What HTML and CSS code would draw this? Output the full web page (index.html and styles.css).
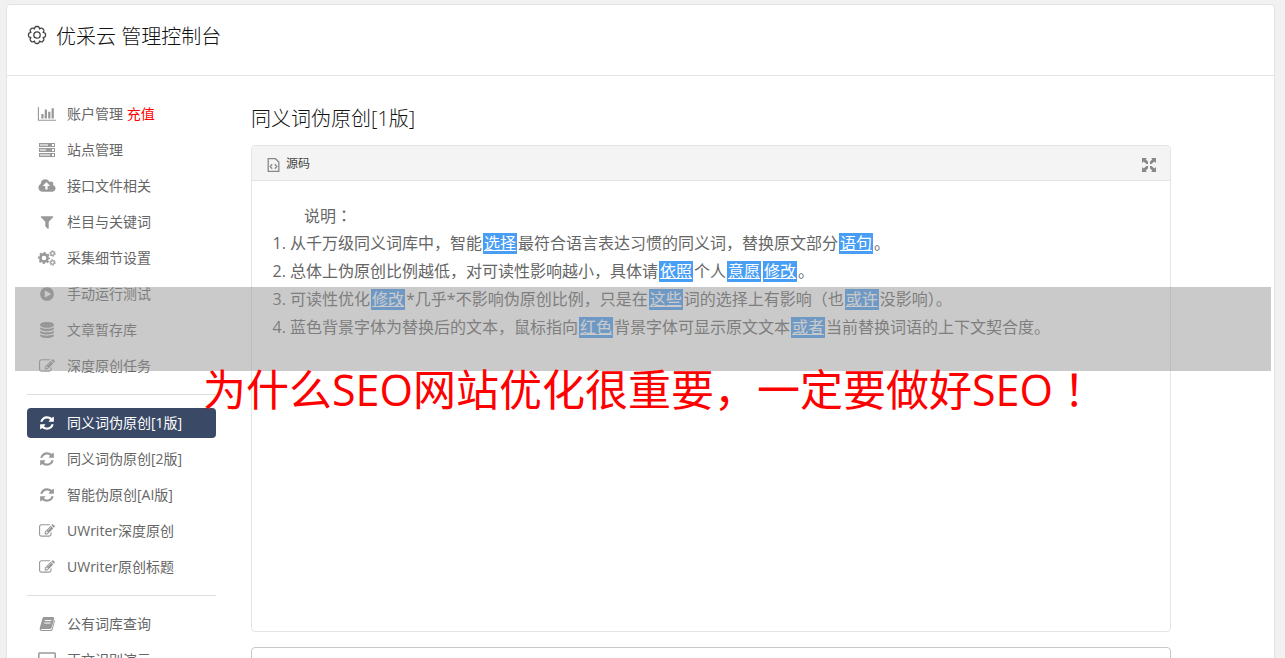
FILE: index.html
```html
<!DOCTYPE html>
<html lang="zh-CN">
<head>
    <meta charset="UTF-8">
    <meta name="viewport" content="width=device-width, initial-scale=1.0">
    <title>优采云 管理控制台</title>
    <link rel="stylesheet" href="styles.css">
</head>
<body>
    <svg class="sprite" aria-hidden="true">
        <symbol id="chart" viewBox="0 0 2048 1792"><path d="M640 896v512h-256v-512h256zm384-512v1024h-256v-1024h256zm1024 1152v128h-2048v-1536h128v1408h1920zm-640-896v768h-256v-768h256zm384-384v1152h-256v-1152h256z"/></symbol>
        <symbol id="server" viewBox="0 0 18 16"><path fill-rule="evenodd" d="M1 1h16v4H1zM2 2v2h8V2zM14 2v2h2V2zM1 6h16v4H1zM2 7v2h6V7zM14 7v2h2V7zM1 11h16v4H1zM2 12v2h10v-2zM14 12v2h2v-2z"/><path opacity=".45" d="M2 2h8v2H2zM2 7h6v2H2zM2 12h10v2H2z"/></symbol>
        <symbol id="cloud" viewBox="0 0 1920 1792"><path d="M1280 864q0-14-9-23l-352-352q-9-9-23-9t-23 9l-351 351q-10 12-10 24 0 14 9 23t23 9h224v352q0 13 9.500 22.500t22.500 9.500h192q13 0 22.500-9.500t9.500-22.500v-352h224q13 0 22.500-9.500t9.500-22.500zm640 288q0 159-112.500 271.500t-271.500 112.500h-1088q-185 0-316.500-131.500t-131.500-316.500q0-130 70-240t188-165q-2-30-2-43 0-212 150-362t362-150q156 0 285.500 87t188.500 231q71-62 166-62 106 0 181 75t75 181q0 76-41 138 130 31 213.500 135.500t83.500 238.500z"/></symbol>
        <symbol id="filter" viewBox="0 0 1792 1792"><path d="M1595 295q17 41-14 70l-493 493v742q0 42-39 59-13 5-25 5-27 0-45-19l-256-256q-19-19-19-45v-486l-493-493q-31-29-14-70 17-39 59-39h1280q42 0 59 39z"/></symbol>
        <symbol id="cogs" viewBox="0 0 18 16">
            <g fill="none" stroke="currentColor">
                <circle cx="6" cy="8" r="3.600" stroke-width="2.600"/>
                <circle cx="6" cy="8" r="5.300" stroke-width="1.600" stroke-dasharray="2.080 2.080" stroke-dashoffset="1.040"/>
                <circle cx="14.500" cy="3.500" r="1.800" stroke-width="1.300"/>
                <circle cx="14.500" cy="3.500" r="2.800" stroke-width="1" stroke-dasharray="1.460 1.460"/>
                <circle cx="14.500" cy="12.500" r="1.800" stroke-width="1.300"/>
                <circle cx="14.500" cy="12.500" r="2.800" stroke-width="1" stroke-dasharray="1.460 1.460"/>
            </g>
        </symbol>
        <symbol id="play" viewBox="0 0 1792 1792"><path d="M896 128q209 0 385.500 103t279.500 279.500 103 385.500-103 385.500-279.500 279.500-385.500 103-385.500-103-279.500-279.500-103-385.500 103-385.500 279.500-279.500 385.500-103zm384 823q32-18 32-55t-32-55l-544-320q-31-19-64-1-32 19-32 56v640q0 37 32 56 16 8 32 8 17 0 32-9z"/></symbol>
        <symbol id="database" viewBox="0 0 1792 1792"><path d="M896 768q237 0 443-43t325-127v170q0 69-103 128t-280 93.500-385 34.500-385-34.500-280-93.500-103-128v-170q119 84 325 127t443 43zm0 768q237 0 443-43t325-127v170q0 69-103 128t-280 93.500-385 34.500-385-34.500-280-93.500-103-128v-170q119 84 325 127t443 43zm0-384q237 0 443-43t325-127v170q0 69-103 128t-280 93.500-385 34.500-385-34.500-280-93.500-103-128v-170q119 84 325 127t443 43zm0-1152q208 0 385 34.500t280 93.500 103 128v128q0 69-103 128t-280 93.500-385 34.500-385-34.500-280-93.500-103-128v-128q0-69 103-128t280-93.500 385-34.500z"/></symbol>
        <symbol id="edit" viewBox="0 0 1792 1792"><path d="M888 1184l116-116-152-152-116 116v56h96v96h56zm440-720q-16-16-33 1l-350 350q-17 17-1 33t33-1l350-350q17-17 1-33zm80 594v190q0 119-84.500 203.500t-203.500 84.500h-832q-119 0-203.500-84.500t-84.500-203.500v-832q0-119 84.500-203.500t203.500-84.500h832q63 0 117 25 15 7 18 23 3 17-9 29l-49 49q-14 14-32 8-23-6-45-6h-832q-66 0-113 47t-47 113v832q0 66 47 113t113 47h832q66 0 113-47t47-113v-126q0-13 9-22l64-64q15-15 35-7t20 29zm-96-738l288 288-672 672h-288v-288zm444 132l-92 92-288-288 92-92q28-28 68-28t68 28l152 152q28 28 28 68t-28 68z"/></symbol>
        <symbol id="refresh" viewBox="0 0 1792 1792"><path d="M1639 1056q0 5-1 7-64 268-268 434.500t-478 166.500q-146 0-282.500-55t-243.500-157l-129 129q-19 19-45 19t-45-19-19-45v-448q0-26 19-45t45-19h448q26 0 45 19t19 45-19 45l-137 137q71 66 161 102t187 36q134 0 250-65t186-179q11-17 53-117 8-23 30-23h192q13 0 22.500 9.500t9.500 22.500zm25-800v448q0 26-19 45t-45 19h-448q-26 0-45-19t-19-45 19-45l138-138q-148-137-349-137-134 0-250 65t-186 179q-11 17-53 117-8 23-30 23h-199q-13 0-22.500-9.500t-9.500-22.500v-7q65-268 270-434.500t480-166.500q146 0 284 55.500t245 156.500l130-129q19-19 45-19t45 19 19 45z"/></symbol>
        <symbol id="book" viewBox="0 0 16 16"><path fill-rule="evenodd" d="M5 1h9q1.500 0 1.200 1.500L12.500 12q-.4 1-1.500 1H3q-1.300 0-1 1h9.500q1 0 1.300-1L15.300 4q.8.500.6 1.300L13.500 14q-.4 1-1.500 1H2.500Q.5 15 .6 12.500L3.500 2.300Q4 1 5 1zM6 4l-.3 1h6.500l.3-1zM5.300 6.500L5 7.500h6.500l.3-1z"/></symbol>
        <symbol id="screen" viewBox="0 0 18 16"><path fill="none" stroke="currentColor" stroke-width="1.500" d="M1.500 1h15q.7 0 .7.700v9.600q0 .7-.7.700h-15q-.7 0-.7-.7V1.700q0-.7.700-.7zM6 15h6"/></symbol>
    </svg>

    <div class="wrapper">
        <header class="header">
            <svg class="gear" viewBox="0 0 20 20"><path d="M16.200 7.400l1.300.5q1 .4 1 1.300v1.600q0 .9-1 1.300l-1.300.5l.6 1.400q.4 1-.3 1.600l-.9.900q-.6.700-1.600.3l-1.400-.6l-.5 1.300q-.4 1-1.300 1H9.200q-.9 0-1.300-1l-.5-1.300l-1.400.6q-1 .4-1.600-.3l-.9-.9q-.7-.6-.3-1.600l.6-1.400l-1.300-.5q-1-.4-1-1.300V9.200q0-.9 1-1.300l1.300-.5l-.6-1.400q-.4-1 .3-1.600l.9-.9q.6-.7 1.600-.3l1.400.6l.5-1.300q.4-1 1.300-1h1.600q.9 0 1.300 1l.5 1.300l1.400-.6q1-.4 1.600.3l.9.900q.7.600.3 1.600z"/><circle cx="10" cy="10" r="3.200"/></svg>
            <h1>优采云 管理控制台</h1>
        </header>

        <div class="content">
            <nav class="sidebar">
                <a href="#" class="nav-item"><svg><use href="#chart"/></svg><span>账户管理 <em>充值</em></span></a>
                <a href="#" class="nav-item"><svg><use href="#server"/></svg>站点管理</a>
                <a href="#" class="nav-item"><svg><use href="#cloud"/></svg>接口文件相关</a>
                <a href="#" class="nav-item"><svg><use href="#filter"/></svg>栏目与关键词</a>
                <a href="#" class="nav-item"><svg><use href="#cogs"/></svg>采集细节设置</a>
                <a href="#" class="nav-item"><svg><use href="#play"/></svg>手动运行测试</a>
                <a href="#" class="nav-item"><svg><use href="#database"/></svg>文章暂存库</a>
                <a href="#" class="nav-item"><svg><use href="#edit"/></svg>深度原创任务</a>
                <hr>
                <a href="#" class="nav-item active"><svg><use href="#refresh"/></svg>同义词伪原创[1版]</a>
                <a href="#" class="nav-item"><svg><use href="#refresh"/></svg>同义词伪原创[2版]</a>
                <a href="#" class="nav-item"><svg><use href="#refresh"/></svg>智能伪原创[AI版]</a>
                <a href="#" class="nav-item"><svg><use href="#edit"/></svg>UWriter深度原创</a>
                <a href="#" class="nav-item"><svg><use href="#edit"/></svg>UWriter原创标题</a>
                <hr>
                <a href="#" class="nav-item"><svg><use href="#book"/></svg>公有词库查询</a>
                <a href="#" class="nav-item"><svg><use href="#screen"/></svg>正文识别演示</a>
            </nav>

            <main class="main">
                <h2>同义词伪原创[1版]</h2>
                <section class="editor">
                    <div class="toolbar">
                        <button type="button" class="tool">
                            <svg class="source" viewBox="0 0 12 14"><path d="M.7.700h7.300l3.300 3.300v9.300H.7zM4.700 6.300L2.700 8.500l2 2.200M7.300 6.300l2 2.200-2 2.200"/></svg>
                            源码
                        </button>
                        <button type="button" class="tool" aria-label="最大化">
                            <svg class="expand" viewBox="0 0 14 14"><path d="M0 0h5L3.700 1.300 6 3.700V6H4.500L1.600 3.400 0 5zM14 0v5l-1.600-1.600L9.500 6H8V3.700l2.300-2.400L9 0zM0 14V9l1.600 1.600L4.500 8H6v2.300l-2.300 2.400L5 14zM14 14H9l1.300-1.300L8 10.300V8h1.500l2.900 2.600L14 9z"/></svg>
                        </button>
                    </div>
                    <div class="editor-body">
                        <p>说明<span class="mark" lang="zh-TW">：</span></p>
                        <ol>
                            <li>从千万级同义词库中，智能<a href="#">选择</a>最符合语言表达习惯的同义词，替换原文部分<a href="#">语句</a>。</li>
                            <li>总体上伪原创比例越低，对可读性影响越小，具体请<a href="#">依照</a>个人<a href="#">意愿</a><a href="#">修改</a>。</li>
                            <li>可读性优化<a href="#">修改</a>*几乎*不影响伪原创比例，只是在<a href="#">这些</a>词的选择上有影响（也<a href="#">或许</a>没影响）。</li>
                            <li>蓝色背景字体为替换后的文本，鼠标指向<a href="#">红色</a>背景字体可显示原文文本<a href="#">或者</a>当前替换词语的上下文契合度。</li>
                        </ol>
                    </div>
                </section>
                <textarea class="result" aria-label="结果"></textarea>
            </main>
        </div>
    </div>

    <div class="banner">
        <div class="banner-title">为什么SEO网站优化很重要，一定要做好SEO<span class="mark" lang="zh-TW">！</span></div>
    </div>
</body>
</html>
```
FILE: styles.css
```css
* {
    box-sizing: border-box;
}

body {
    margin: 0;
    padding: 4px 10px 0 6px;
    height: 100vh;
    overflow: hidden;
    background: #f1f1f1;
    color: #666;
    font-family: "Open Sans", "Noto Sans CJK SC", sans-serif;
    font-size: 14px;
}

h1, h2 {
    margin: 0;
    font-size: 20px;
    line-height: 30px;
    font-weight: 300;
    color: #111;
}

a {
    text-decoration: none;
}

.sprite {
    position: absolute;
    width: 0;
    height: 0;
}

/* 居中的全角标点 */
.mark {
    font-family: "Noto Sans CJK TC", sans-serif;
}

.wrapper {
    background: #fff;
    border: 1px solid #e4e4e4;
    border-radius: 4px;
}

.header {
    display: flex;
    align-items: center;
    gap: 9px;
    padding: 17px 20px 23px;
    border-bottom: 1px solid #e4e4e4;
}

.gear {
    width: 20px;
    height: 20px;
    margin-bottom: 4px;
    fill: none;
    stroke: #444;
    stroke-width: 1.3;
}

.content {
    display: flex;
    gap: 35px;
    padding: 23px 20px;
}

.sidebar {
    flex: 0 0 189px;
}

.nav-item {
    display: flex;
    align-items: center;
    gap: 10px;
    height: 30px;
    margin-bottom: 6px;
    padding: 0 10px 2px;
    border-radius: 4px;
    color: #666;
    white-space: nowrap;
}

.nav-item svg {
    width: 20px;
    height: 16px;
    margin-top: 2px;
    color: #999;
    fill: currentColor;
}

.nav-item em {
    font-style: normal;
    color: #f00;
}

.nav-item.active {
    background: #3a4a66;
    color: #fff;
}

.nav-item.active svg {
    color: #fff;
}

.sidebar hr {
    height: 1px;
    margin: 13px 0;
    border: 0;
    background: #ddd;
}

.nav-item:has(+ hr) {
    margin-bottom: 0;
}

.main {
    flex: 1;
    max-width: 920px;
    padding-top: 5px;
}

.editor {
    margin: 11px 0 15px;
    border: 1px solid #e4e4e4;
    border-radius: 4px;
}

.toolbar {
    display: flex;
    justify-content: space-between;
    height: 35px;
    padding: 0 14px 0 15px;
    background: #f4f4f4;
    border-bottom: 1px solid #e4e4e4;
    border-radius: 4px 4px 0 0;
}

.tool {
    display: flex;
    align-items: center;
    gap: 6px;
    padding: 0;
    border: 0;
    background: none;
    color: #444;
    font: inherit;
    font-size: 12px;
    cursor: pointer;
}

.tool svg {
    margin-top: 3px;
}

.source {
    width: 13px;
    height: 14px;
    fill: none;
    stroke: #888;
    stroke-width: 1.3;
}

.expand {
    width: 14px;
    height: 14px;
    fill: #888;
}

.editor-body {
    min-height: 450px;
    padding: 20px;
    font-size: 16px;
    line-height: 28px;
}

.editor-body p {
    height: 28px;
    margin: 0;
    text-indent: 32px;
}

.editor-body ol {
    margin: 0;
    padding-left: 18px;
}

.editor-body a {
    display: inline-block;
    margin: 0 1px;
    padding: 0 1px;
    line-height: 21px;
    background: #489df5;
    color: #fff;
    text-decoration: underline;
}

.result {
    display: block;
    width: 100%;
    height: 120px;
    border: 1px solid #c8c8c8;
    border-radius: 4px;
    resize: none;
}

/* 覆盖在页面上的横幅 */
.banner {
    position: absolute;
    top: 287px;
    left: 15px;
    right: 14px;
    height: 84px;
    padding: 70px 0 0 188px;
    background: rgba(150, 150, 150, 0.5);
    pointer-events: none;
}

.banner-title {
    color: #f00;
    font-size: 43px;
    line-height: 60px;
    white-space: nowrap;
}
```
